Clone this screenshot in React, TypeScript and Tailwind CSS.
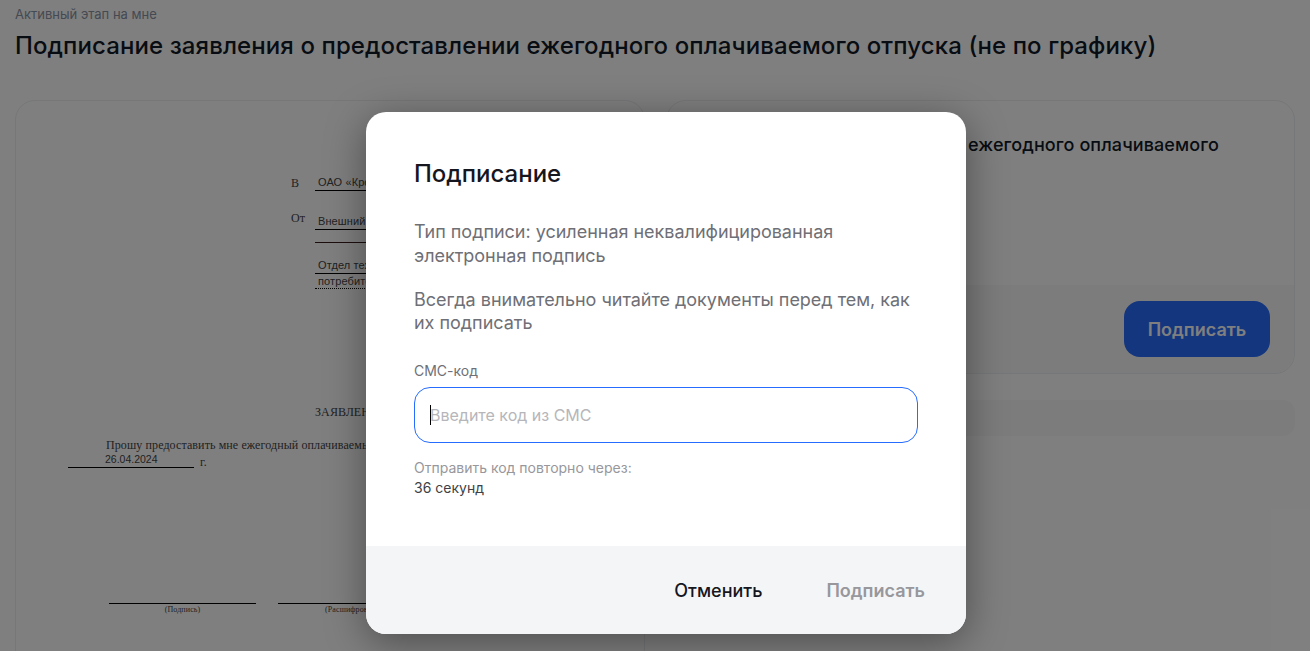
import { useState } from "react";

function DocLine({ text, className = "" }: { text: string; className?: string }) {
  return (
    <div className={`w-[260px] overflow-hidden whitespace-nowrap border-b border-black pl-[3px] font-['Liberation_Sans',sans-serif] text-[11px] ${className}`}>
      {text}
    </div>
  );
}

function DocumentPreview() {
  return (
    <div className="font-['Liberation_Serif',serif] text-[12px] leading-[14px] tracking-[0.1px] text-[#444444]">
      <div className="ml-[275px] mt-[73px] flex items-start gap-[15px]">
        <span className="mt-[2px] w-[9px]">В</span>
        <DocLine text="ОАО «Кро" className="h-[17px] leading-[16px]" />
      </div>
      <div className="ml-[275px] mt-[20px] flex items-start gap-[8px]">
        <span className="w-[16px]">От</span>
        <div>
          <DocLine text="Внешний" className="mt-[2px] h-[17px] leading-[16px]" />
          <div className="mt-[12px] w-[260px] border-b border-[#3a1c1c]" />
          <DocLine text="Отдел тех" className="mt-[14px] h-[17px] leading-[16px]" />
          <DocLine text="потребите" className="h-[15px] border-dotted leading-[14px]" />
        </div>
      </div>
      <div className="ml-[299px] mt-[116px]">ЗАЯВЛЕНИЕ</div>
      <div className="ml-[90px] mt-[19px] whitespace-nowrap">Прошу предоставить мне ежегодный оплачиваемый</div>
      <div className="ml-[52px] flex items-end gap-[6px]">
        <div className="h-[16px] w-[126px] border-b border-black pl-[37px] font-['Liberation_Sans',sans-serif] text-[10.5px] leading-[14px] tracking-normal">
          26.04.2024
        </div>
        <span className="mb-[-1px]">г.</span>
      </div>
      <div className="ml-[93px] mt-[135px] flex gap-[22px] text-center text-[8px] leading-[10px]">
        <div className="w-[147px] border-t border-black pt-px">(Подпись)</div>
        <div className="w-[147px] border-t border-black pt-px">(Расшифровка)</div>
      </div>
    </div>
  );
}

export default function App() {
  const [code, setCode] = useState("");

  return (
    <div className="relative h-[651px] w-[1310px] overflow-hidden bg-white font-['Inter',sans-serif]">
      <div className="px-[15px] pt-[6px]">
        <div className="text-[13px] leading-[16px] text-[#8b93a3]">Активный этап на мне</div>
        <h1 className="mt-[8px] whitespace-nowrap text-[24px] font-medium leading-[32px] tracking-[0.1px] text-[#111827]">
          Подписание заявления о предоставлении ежегодного оплачиваемого отпуска (не по графику)
        </h1>

        <div className="mt-[38px] flex gap-[21px]">
          <div className="h-[600px] w-[630px] shrink-0 rounded-[20px] border border-[#eceef1]">
            <DocumentPreview />
          </div>

          <div className="w-[629px] shrink-0">
            <div className="rounded-[20px] border border-[#eceef1]">
              <div className="h-[184px] pl-[30px] pr-[24px] pt-[32px] text-[18px] font-medium leading-[24px] tracking-[0.1px] text-[#111827]">
                Заявление о предоставлении ежегодного оплачиваемого отпуска (не по графику)
              </div>
              <div className="flex justify-end rounded-b-[20px] bg-[#f9f9fa] px-[24px] py-[16px]">
                <button className="h-[56px] w-[146px] rounded-[16px] bg-[#266cff] text-[18px] font-semibold text-white">
                  Подписать
                </button>
              </div>
            </div>
            <div className="mt-[26px] h-[36px] rounded-[12px] bg-[#f9f9fa]" />
          </div>
        </div>
      </div>

      <div className="absolute inset-0 flex items-start justify-center bg-black/50 pl-[22px] pt-[112px]">
        <div className="w-[600px] overflow-hidden rounded-[20px] bg-white shadow-[0_8px_40px_rgba(0,0,0,0.4)]">
          <div className="h-[434px] px-[48px] pt-[44px]">
            <h2 className="text-[24px] font-medium leading-[36px] text-[#16161e]">Подписание</h2>
            <p className="mt-[28px] text-[18px] leading-[24px] tracking-[-0.02px] text-[#6f6f76]">
              Тип подписи: усиленная неквалифицированная электронная подпись
            </p>
            <p className="mt-[20px] text-[18px] leading-[23px] tracking-[-0.02px] text-[#6f6f76]">
              Всегда внимательно читайте документы перед тем, как их подписать
            </p>
            <label className="mt-[27px] block text-[14px] leading-[20px] text-[#6f6f76]">СМС-код</label>
            <div className="relative mt-[6px]">
              <input
                value={code}
                onChange={(e) => setCode(e.target.value)}
                placeholder="Введите код из СМС"
                className="block h-[56px] w-full rounded-[16px] border border-[#266cff] px-[15px] text-[16px] text-[#16161e] outline-none placeholder:text-[#b6b6ba]"
              />
              <span className="absolute left-[16px] top-[18px] h-[20px] w-px bg-black" />
            </div>
            <div className="mt-[15px] text-[14px] leading-[20px] text-[#97979c]">Отправить код повторно через:</div>
            <div className="text-[14px] leading-[20px] text-[#3f3f46]">36 секунд</div>
          </div>
          <div className="flex h-[88px] items-center justify-end gap-[64px] bg-[#f4f5f7] pr-[41px]">
            <button className="text-[18px] font-medium text-[#16161e]">Отменить</button>
            <button disabled className="text-[18px] font-semibold text-[#97979c]">
              Подписать
            </button>
          </div>
        </div>
      </div>
    </div>
  );
}
